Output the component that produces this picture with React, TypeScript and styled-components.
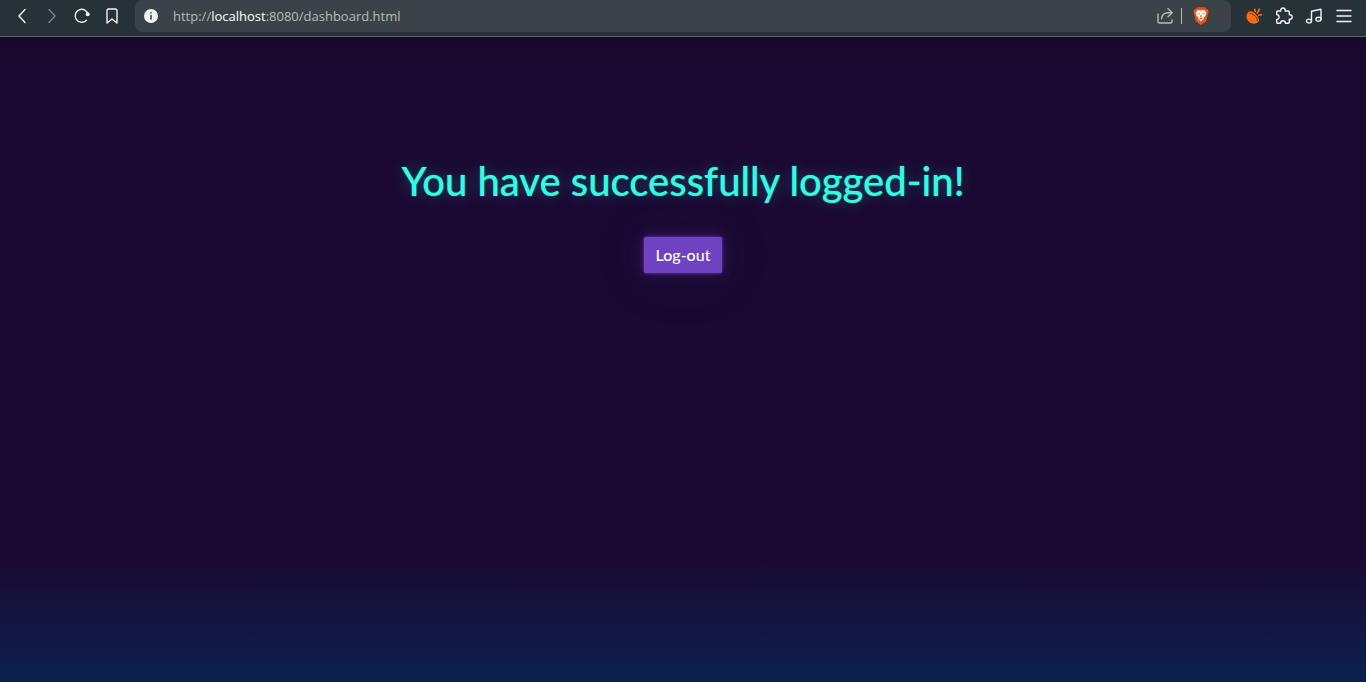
import React from "react";
import styled, { createGlobalStyle } from "styled-components";

const GlobalStyle = createGlobalStyle`
  *, *::before, *::after { box-sizing: border-box; }
  body {
    margin: 0;
    background: #1a0933;
    font-family: Lato, "Liberation Sans", sans-serif;
  }
`;

const Window = styled.div`
  display: flex;
  flex-direction: column;
  min-height: 100vh;
`;

const Toolbar = styled.header`
  display: flex;
  align-items: center;
  height: 37px;
  padding: 0 7px 4px;
  background: #263238;
  border-bottom: 1px solid #5b6569;
`;

const IconButton = styled.button<{ $muted?: boolean }>`
  display: flex;
  align-items: center;
  justify-content: center;
  flex: none;
  width: 30px;
  height: 32px;
  padding: 0;
  border: 0;
  background: none;
  color: ${(p) => (p.$muted ? "#7b8487" : "#f1f3f3")};
  cursor: pointer;
`;

const AddressBar = styled.div`
  display: flex;
  align-items: center;
  flex: 1;
  height: 32px;
  margin: 0 8px;
  padding: 0 15px 0 1px;
  border-radius: 8px;
  background: #3a4448;
`;

const Url = styled.a`
  flex: 1;
  padding-left: 7px;
  color: #b5babc;
  font: 13px/20px "Open Sans", "Noto Sans", sans-serif;
  text-decoration: none;
  white-space: nowrap;
`;

const Host = styled.span`
  color: #ffffff;
`;

const Divider = styled.span`
  width: 1px;
  height: 16px;
  margin: 0 4px 0 1px;
  background: #b5babc;
`;

const Page = styled.main`
  display: flex;
  flex: 1;
  flex-direction: column;
  align-items: center;
  padding: 120px 16px 32px;
  background: linear-gradient(#180a2e 0%, #1b0932 10%, #1b0932 80%, #0b204c 100%);
`;

const Heading = styled.h1`
  margin: 0 0 32px;
  color: #32fbe2;
  font-size: 40px;
  font-weight: 500;
  line-height: 48px;
  text-align: center;
  text-shadow: 0 0 1px rgba(50, 251, 226, 0.3), 0 0 2px rgba(50, 251, 226, 0.3),
    0 0 16px rgba(50, 251, 226, 0.3);
`;

const LogoutButton = styled.button`
  height: 36px;
  padding: 0 12px;
  border: 0;
  border-radius: 2px;
  background: #6f42c1;
  color: #ffffff;
  font: 500 16px/24px Lato, "Liberation Sans", sans-serif;
  cursor: pointer;
  box-shadow: 0 0 2px rgba(111, 66, 193, 0.9), 0 0 4px rgba(111, 66, 193, 0.4),
    0 0 16px rgba(111, 66, 193, 0.3), 0 0 64px rgba(111, 66, 193, 0.1);
`;

const Icon = styled.svg`
  display: block;
  fill: none;
  stroke: currentColor;
  stroke-width: 1.4;
  stroke-linecap: round;
  stroke-linejoin: round;
`;

type IconProps = { size?: number; children: React.ReactNode };

const Glyph = ({ size = 18, children }: IconProps) => (
  <Icon width={size} height={size} viewBox={`0 0 ${size} ${size}`} aria-hidden="true">
    {children}
  </Icon>
);

export default function App() {
  return (
    <Window>
      <GlobalStyle />
      <Toolbar>
        <IconButton aria-label="Back">
          <Glyph><path d="M12 2.500 6 9l6 6.500" /></Glyph>
        </IconButton>
        <IconButton aria-label="Forward" $muted>
          <Glyph><path d="m6 2.500 6 6.500-6 6.500" /></Glyph>
        </IconButton>
        <IconButton aria-label="Reload">
          <Glyph>
            <path d="M13.500 13.200A6.500 6.500 0 1 1 15.100 7.600" />
            <circle cx="14.700" cy="7.300" r="2" fill="currentColor" stroke="none" />
          </Glyph>
        </IconButton>
        <IconButton aria-label="Bookmark">
          <Glyph><path d="M4 3.500A1.500 1.500 0 0 1 5.500 2h7A1.500 1.500 0 0 1 14 3.500V16l-5-4-5 4Z" /></Glyph>
        </IconButton>
        <AddressBar>
          <IconButton aria-label="Site information">
            <Glyph>
              <circle cx="9" cy="9" r="7" fill="currentColor" stroke="none" />
              <path d="M9 8.500v3.500M9 5.800v.2" stroke="#3a4448" strokeWidth="1.600" />
            </Glyph>
          </IconButton>
          <Url href="http://localhost:8080/dashboard.html">
            http://<Host>localhost</Host>:8080/dashboard.html
          </Url>
          <IconButton aria-label="Share">
            <Glyph>
              <g stroke="#b5babc">
                <path d="M2 7v7.500A1.500 1.500 0 0 0 3.500 16h11a1.500 1.500 0 0 0 1.500-1.500V13" />
                <path d="M12 1.800 16.200 5.800 12 9.800M16 5.800h-4c-3.500 0-6 2.200-6.500 6" />
              </g>
            </Glyph>
          </IconButton>
          <Divider />
          <IconButton aria-label="Shields">
            <Glyph>
              <g stroke="none">
                <path d="M5.500.3h7l1.700 1.800 1.500.2.900 2.500-.6 1.400-1.600 7c-.3 1-.8 1.500-1.500 2L9 17.900l-3.900-2.700c-.7-.5-1.200-1-1.500-2L2 6.200l-.6-1.400.9-2.500 1.500-.2Z" fill="#fb5014" />
                <path d="m5.700 3.100 3.300.4 3.300-.4 1.900 2.600-.6 2.500-2 2.600.2 1L9 14.200l-2.800-2.400.2-1-2-2.600-.6-2.500Z" fill="#fff" />
                <path d="m5.200 6.100 2.900.7-.9 1Zm7.600 0-2.900.7.900 1ZM8.500 8h1l.3 1.900H8.200ZM7 11.300l2-.8 2 .8-2 1.100Z" fill="#fb5014" />
              </g>
            </Glyph>
          </IconButton>
        </AddressBar>
        <IconButton aria-label="Extension">
          <Glyph>
            <g stroke="#fb6a0c">
              <path d="M4.200 5.300C2 7 1.400 10.400 3.300 13c2.200 3.300 6.900 4 9.500 1.300Z" fill="#fb6a0c" />
              <path d="M4.200 5.300c1.900-.7 4.900 1 6.900 3.400 1.900 2.200 2.700 4.500 1.700 5.600-1.400.6-4.200-.9-6.200-3.200-2-2.300-3.300-4.800-2.400-5.800Z" fill="#fb6a0c" />
              <path d="M5.200 6.200c1.600 0 3.800 1.500 5.300 3.300 1.400 1.600 2.100 3.200 1.800 4" stroke="#263238" strokeWidth="0.800" />
              <path d="m10.200 4.500-.5-2.200M12.200 6l2.200-3.800M13.800 8.300l2.600-.7" strokeWidth="1.700" />
            </g>
          </Glyph>
        </IconButton>
        <IconButton aria-label="Extensions">
          <Glyph>
            <path d="M2.700 4h3.100a2.300 2.300 0 1 1 4.400 0h3.100a1 1 0 0 1 1 1v2.800a2.300 2.300 0 1 1 0 4.400v3a1 1 0 0 1-1 1h-2.900a2.400 2.400 0 0 0-4.800 0H2.700a1 1 0 0 1-1-1v-2.800a2.400 2.400 0 0 0 0-4.800V5a1 1 0 0 1 1-1Z" />
          </Glyph>
        </IconButton>
        <IconButton aria-label="Media">
          <Glyph>
            <ellipse cx="4" cy="14" rx="2.500" ry="1.900" />
            <ellipse cx="13.500" cy="12.200" rx="2.500" ry="1.900" />
            <path d="M6.500 14V4.300L16 2.300v9.900" />
          </Glyph>
        </IconButton>
        <IconButton aria-label="Menu">
          <Glyph><path d="M2 3.500h14M2 9h14M2 14.500h14" /></Glyph>
        </IconButton>
      </Toolbar>
      <Page>
        <Heading>You have successfully logged-in!</Heading>
        <LogoutButton>Log-out</LogoutButton>
      </Page>
    </Window>
  );
}
